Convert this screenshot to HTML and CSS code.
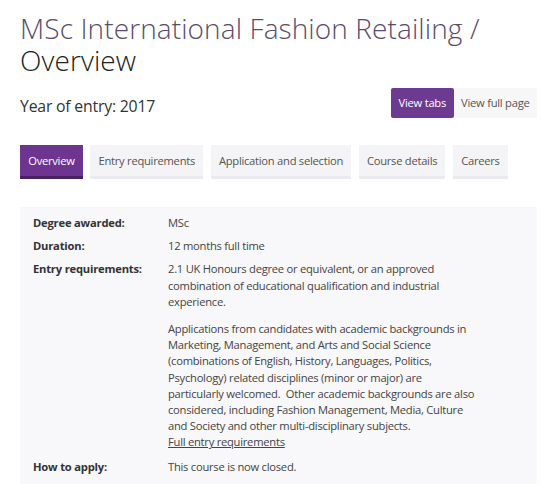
FILE: index.html
```html
<!DOCTYPE html>
<html>
<head>
<meta charset="utf-8">
<link rel="stylesheet" href="styles.css">
</head>
<body>
<div class="page">
  <h1 class="title"><span class="title-main">MSc International Fashion Retailing /</span><br><span class="title-sub">Overview</span></h1>
  <div class="entry-row">
    <div class="year">Year of entry: 2017</div>
    <div class="view-toggle">
      <span class="vbtn vbtn-active">View tabs</span>
      <span class="vbtn">View full page</span>
    </div>
  </div>
  <nav class="tabs">
    <span class="tab tab-active">Overview</span>
    <span class="tab">Entry requirements</span>
    <span class="tab">Application and selection</span>
    <span class="tab">Course details</span>
    <span class="tab">Careers</span>
  </nav>
  <div class="panel">
    <dl class="facts">
      <dt>Degree awarded:</dt>
      <dd>MSc</dd>
      <dt>Duration:</dt>
      <dd>12 months full time</dd>
      <dt>Entry requirements:</dt>
      <dd>
        <p>2.1 UK Honours degree or equivalent, or an approved combination of educational qualification and industrial experience.</p>
        <p>Applications from candidates with academic backgrounds in Marketing, Management, and Arts and Social Science (combinations of English, History, Languages, Politics, Psychology) related disciplines (minor or major) are particularly welcomed.&nbsp; Other academic backgrounds are also considered, including Fashion Management, Media, Culture and Society and other multi-disciplinary subjects.<br><a href="#" class="link">Full entry requirements</a></p>
      </dd>
      <dt>How to apply:</dt>
      <dd>This course is now closed.</dd>
    </dl>
  </div>
</div>
</body>
</html>
```
FILE: styles.css
```css
html, body {
  margin: 0;
  padding: 0;
  background: #ffffff;
}
body {
  font-family: "Open Sans", "Noto Sans", sans-serif;
  color: #444;
}
.page {
  padding: 0 5px 0 20px;
}
.title {
  margin: 0;
  padding-top: 12px;
  font-size: 28px;
  line-height: 32px;
  font-weight: 300;
  letter-spacing: 0.1px;
}
.title-main {
  color: #5a4d6a;
}
.title-sub {
  color: #222;
}
.entry-row {
  display: flex;
  justify-content: space-between;
  align-items: center;
  margin-top: 12px;
}
.year {
  font-size: 15.8px;
  letter-spacing: -0.2px;
  color: #333;
  padding-top: 6px;
}
.view-toggle {
  display: flex;
}
.vbtn {
  font-size: 11.2px;
  letter-spacing: -0.25px;
  line-height: 30px;
  padding: 0 7.5px;
  color: #555;
  background: #f7f7f8;
}
.vbtn-active {
  background: #6d3a92;
  color: #fff;
  border-radius: 2px;
}
.tabs {
  display: flex;
  gap: 7.5px;
  margin-top: 27px;
}
.tab {
  white-space: nowrap;
  font-size: 11.2px;
  letter-spacing: -0.26px;
  line-height: 31px;
  padding: 0 8.2px;
  color: #555;
  background: #f4f3f5;
  border-bottom: 3px solid #eceaee;
}
.tab-active {
  background: #6d3590;
  color: #fff;
  border-bottom-color: #4a1f66;
}
.panel {
  margin-top: 28px;
  background: #f8f7f9;
  padding: 8px 14px 20px 13px;
}
.facts {
  display: grid;
  grid-template-columns: 135px 1fr;
  margin: 0;
  font-size: 11.2px;
  letter-spacing: -0.25px;
  line-height: 16.2px;
}
.facts dt {
  font-weight: bold;
  color: #333;
  margin: 0 0 7px;
  letter-spacing: -0.2px;
}
.facts dd {
  margin: 0 0 7px;
  color: #444;
  max-width: 312px;
}
.facts dd p {
  margin: 0 0 11px;
}
.facts dd p:last-child {
  margin-bottom: 1px;
}
.link {
  color: #444;
  text-decoration: underline;
}
```
